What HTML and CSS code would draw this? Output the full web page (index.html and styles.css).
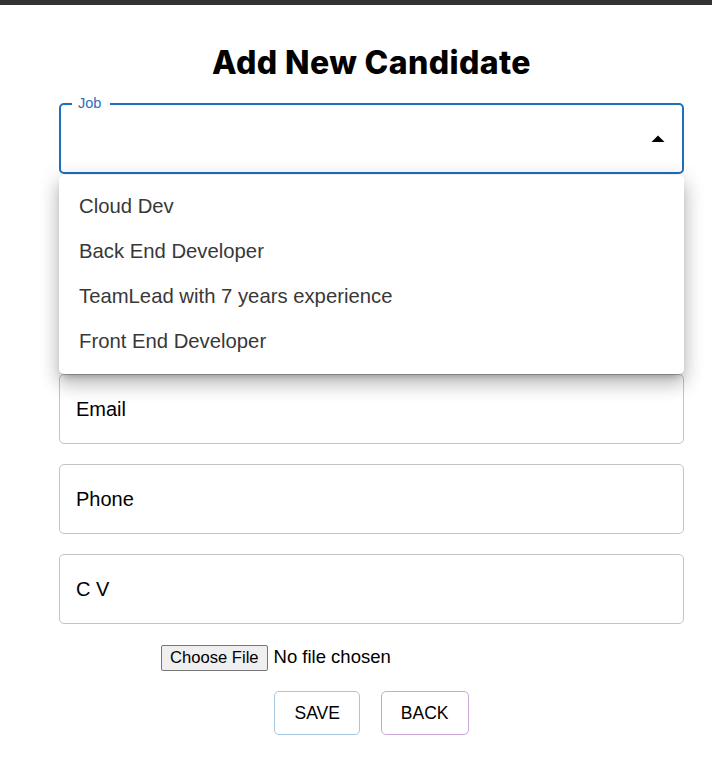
FILE: index.html
```html
<!DOCTYPE html>
<html lang="en">
<head>
<meta charset="utf-8">
<title>Add New Candidate</title>
<link rel="stylesheet" href="styles.css">
</head>
<body>
<div class="topbar"></div>
<main class="form">
  <h1 class="title">Add New Candidate</h1>

  <div class="select-wrap">
    <div class="field field-focused">
      <span class="field-label">Job</span>
      <svg class="arrow" width="14" height="8" viewBox="0 0 14 8"><path d="M0.5 7 L7 0.5 L13.5 7 Z" fill="#000"/></svg>
    </div>
    <ul class="menu">
      <li class="menu-item">Cloud Dev</li>
      <li class="menu-item">Back End Developer</li>
      <li class="menu-item">TeamLead with 7 years experience</li>
      <li class="menu-item">Front End Developer</li>
    </ul>
  </div>

  <div class="field"><span class="placeholder">Name</span></div>
  <div class="field"><span class="placeholder">Surname</span></div>
  <div class="field"><span class="placeholder">Email</span></div>
  <div class="field"><span class="placeholder">Phone</span></div>
  <div class="field"><span class="placeholder">C V</span></div>

  <div class="file-row">
    <input class="file-input" type="file">
  </div>

  <div class="actions">
    <button class="btn btn-save" type="button">SAVE</button>
    <button class="btn btn-back" type="button">BACK</button>
  </div>
</main>
</body>
</html>
```

FILE: styles.css
```css
* { box-sizing: border-box; }

body {
  margin: 0;
  background: #fff;
  font-family: "Liberation Sans", Arial, sans-serif;
  color: #000;
}

.topbar {
  height: 5px;
  background: #333333;
}

.form {
  width: 625px;
  margin-left: 59px;
  display: flex;
  flex-direction: column;
  gap: 20px;
}

.title {
  margin: 38px 0 0;
  text-align: center;
  font-family: Inter, "Liberation Sans", sans-serif;
  font-weight: 800;
  font-size: 32px;
  line-height: 40px;
  letter-spacing: 0.4px;
  color: #000;
}

.select-wrap {
  position: relative;
}

.field {
  position: relative;
  height: 70px;
  border: 1px solid #c4c4c4;
  border-radius: 5px;
  display: flex;
  align-items: center;
  padding-left: 16px;
}

.field-focused {
  border: 2px solid #1f6fc0;
  height: 71px;
}

.field-label {
  position: absolute;
  left: 11px;
  top: -10px;
  padding: 0 9px 0 6px;
  background: #fff;
  font-size: 14.5px;
  line-height: 16px;
  color: #2a6fb8;
}

.arrow {
  position: absolute;
  right: 17px;
  top: 30px;
}

.placeholder {
  font-size: 20px;
  color: #000;
}

.menu {
  position: absolute;
  left: 0;
  top: 72px;
  width: 100%;
  margin: 0;
  padding: 9px 0 10px;
  list-style: none;
  background: #fff;
  border-radius: 5px;
  box-shadow: 0 6px 7px -4px rgba(0,0,0,0.25), 0 11px 18px 1px rgba(0,0,0,0.16), 0 4px 20px 3px rgba(0,0,0,0.12);
  z-index: 5;
}

.menu-item {
  height: 45px;
  padding: 0 20px;
  display: flex;
  align-items: center;
  font-size: 20.3px;
  color: #383838;
}

.file-row {
  padding-left: 102px;
  margin-top: 1px;
}

.file-input {
  font-family: "Liberation Sans", Arial, sans-serif;
  font-size: 18.5px;
  color: #000;
}

.file-input::file-selector-button {
  font-family: "Liberation Sans", Arial, sans-serif;
  font-size: 16.6px;
  height: 26px;
  padding: 0 8px;
  margin-right: 6px;
  border: 1px solid #767676;
  border-radius: 2px;
  background: #efefef;
  color: #000;
  vertical-align: middle;
}

.actions {
  display: flex;
  justify-content: center;
  gap: 21px;
  margin-top: 0;
}

.btn {
  height: 44px;
  padding: 0 19px;
  background: #fff;
  border-radius: 5px;
  font-family: "Liberation Sans", Arial, sans-serif;
  font-size: 17.5px;
  color: #000;
}

.btn-save { border: 1px solid #a5c6e0; }
.btn-back { border: 1px solid #c9a5d8; }
```
